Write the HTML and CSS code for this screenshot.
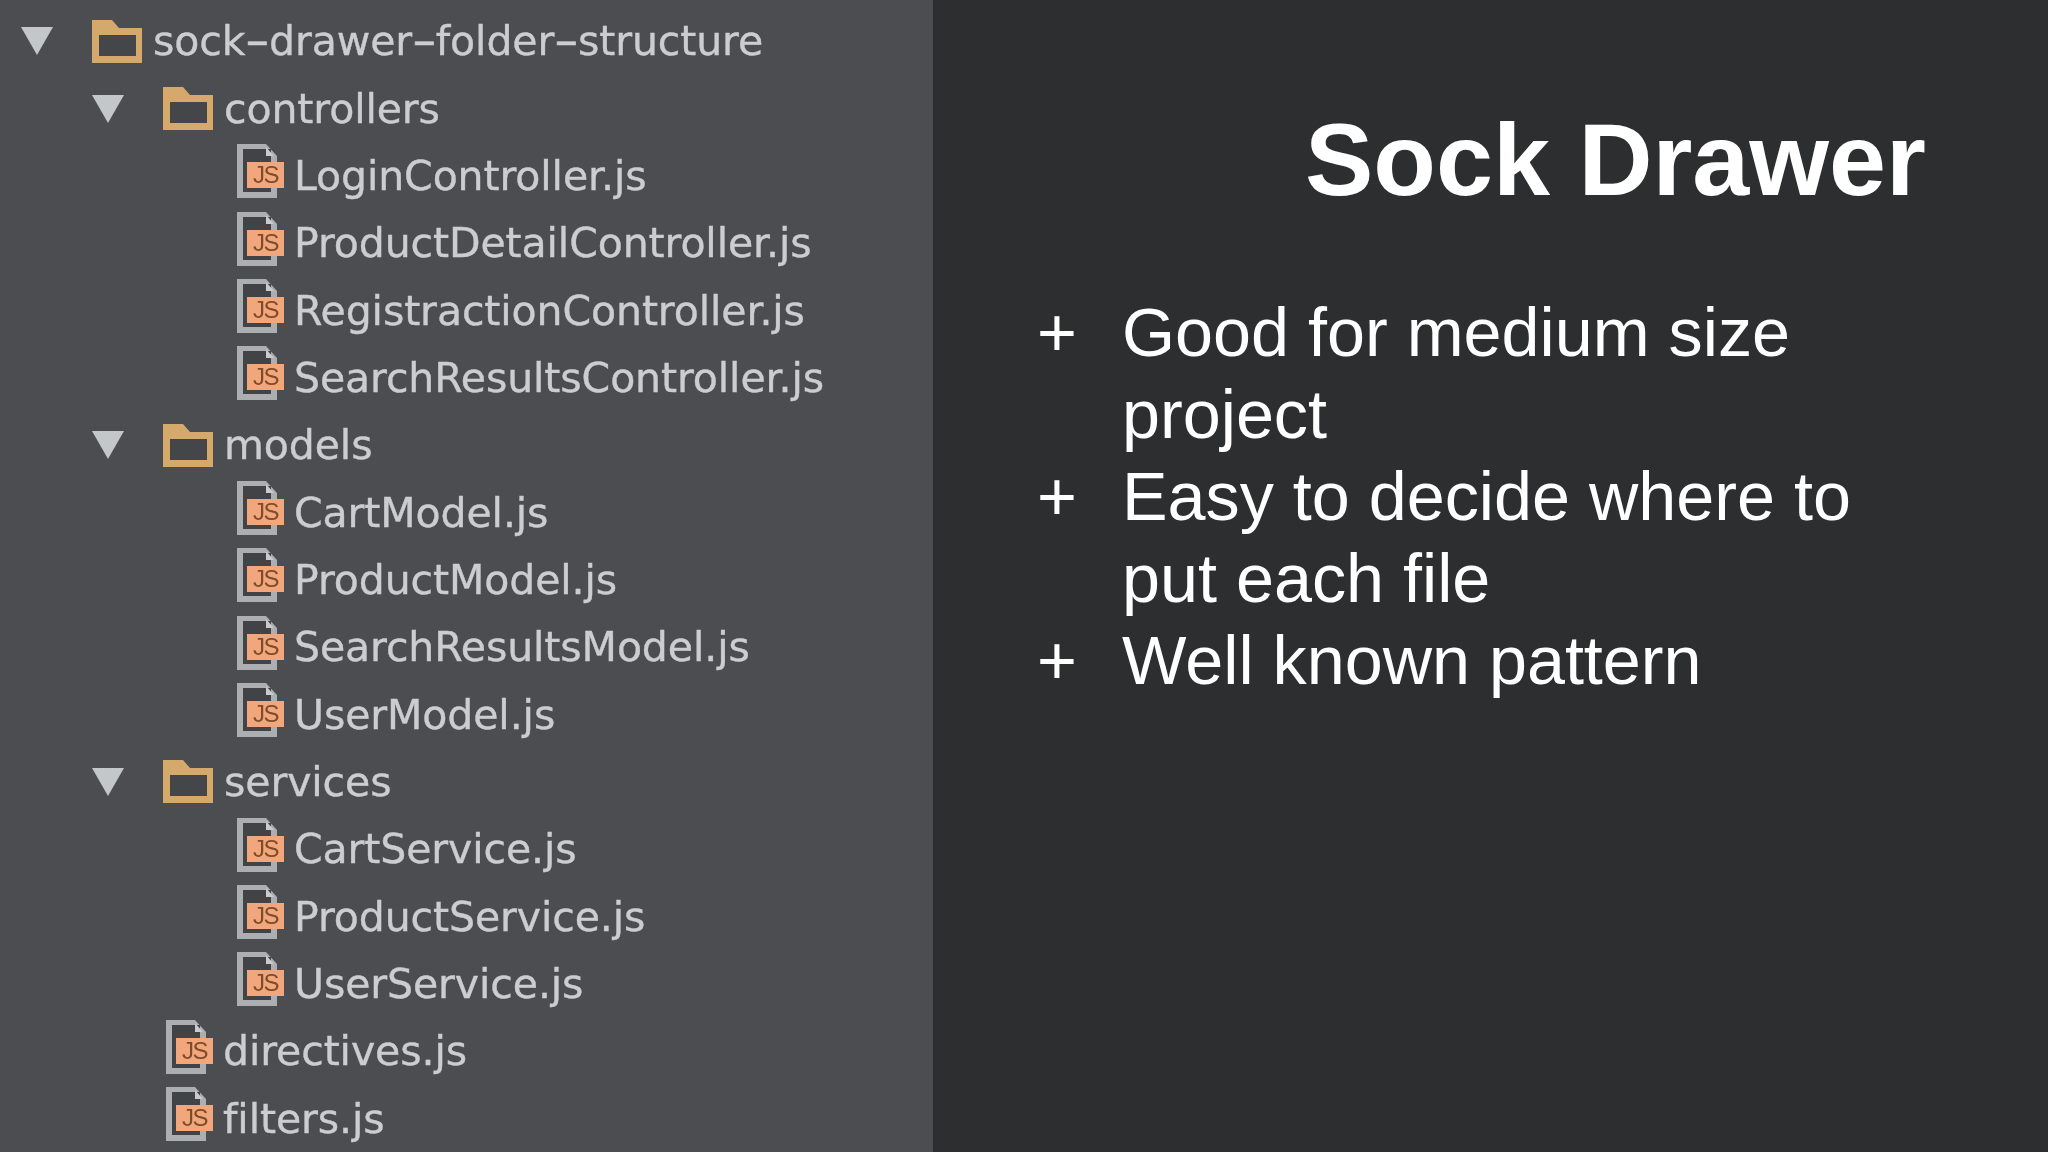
FILE: index.html
```html
<!DOCTYPE html>
<html lang="en">
<head>
<meta charset="utf-8">
<title>Sock Drawer</title>
<link rel="stylesheet" href="styles.css">
</head>
<body>
<svg class="defs" width="0" height="0" aria-hidden="true">
  <symbol id="tri" viewBox="0 0 32 28"><path d="M0 0H32L16 28Z" fill="#c3c7c9"/></symbol>
  <symbol id="folder" viewBox="0 0 50 43"><path fill-rule="evenodd" d="M0 0H20L27 8H50V43H0ZM7 15V36H44V15Z" fill="#d5a96b"/><rect x="7" y="15" width="37" height="21" fill="#45464a"/></symbol>
  <symbol id="file" viewBox="0 0 40 54">
    <path fill-rule="evenodd" d="M0 0H29L40 12V54H0ZM6 5V48H34V14H27V5Z" fill="#abafb2"/>
    <rect x="6" y="5" width="28" height="43" fill="#424346"/>
    <path d="M29 3L37 12H29Z" fill="#c9cccd"/>
  </symbol>
</svg>
<main class="slide">
  <section class="tree">
    <div class="row lvl0"><svg class="tri"><use href="#tri"/></svg><svg class="folder"><use href="#folder"/></svg><span class="name">sock<span class="hy">-</span>drawer<span class="hy">-</span>folder<span class="hy">-</span>structure</span></div>
    <div class="row lvl1"><svg class="tri"><use href="#tri"/></svg><svg class="folder"><use href="#folder"/></svg><span class="name">controllers</span></div>
    <div class="row lvl2"><div class="file"><svg class="page"><use href="#file"/></svg><b class="badge">JS</b></div><span class="name">LoginController.js</span></div>
    <div class="row lvl2"><div class="file"><svg class="page"><use href="#file"/></svg><b class="badge">JS</b></div><span class="name">ProductDetailController.js</span></div>
    <div class="row lvl2"><div class="file"><svg class="page"><use href="#file"/></svg><b class="badge">JS</b></div><span class="name">RegistractionController.js</span></div>
    <div class="row lvl2"><div class="file"><svg class="page"><use href="#file"/></svg><b class="badge">JS</b></div><span class="name">SearchResultsController.js</span></div>
    <div class="row lvl1"><svg class="tri"><use href="#tri"/></svg><svg class="folder"><use href="#folder"/></svg><span class="name">models</span></div>
    <div class="row lvl2"><div class="file"><svg class="page"><use href="#file"/></svg><b class="badge">JS</b></div><span class="name">CartModel.js</span></div>
    <div class="row lvl2"><div class="file"><svg class="page"><use href="#file"/></svg><b class="badge">JS</b></div><span class="name">ProductModel.js</span></div>
    <div class="row lvl2"><div class="file"><svg class="page"><use href="#file"/></svg><b class="badge">JS</b></div><span class="name">SearchResultsModel.js</span></div>
    <div class="row lvl2"><div class="file"><svg class="page"><use href="#file"/></svg><b class="badge">JS</b></div><span class="name">UserModel.js</span></div>
    <div class="row lvl1"><svg class="tri"><use href="#tri"/></svg><svg class="folder"><use href="#folder"/></svg><span class="name">services</span></div>
    <div class="row lvl2"><div class="file"><svg class="page"><use href="#file"/></svg><b class="badge">JS</b></div><span class="name">CartService.js</span></div>
    <div class="row lvl2"><div class="file"><svg class="page"><use href="#file"/></svg><b class="badge">JS</b></div><span class="name">ProductService.js</span></div>
    <div class="row lvl2"><div class="file"><svg class="page"><use href="#file"/></svg><b class="badge">JS</b></div><span class="name">UserService.js</span></div>
    <div class="row lvl1f"><div class="file"><svg class="page"><use href="#file"/></svg><b class="badge">JS</b></div><span class="name">directives.js</span></div>
    <div class="row lvl1f"><div class="file"><svg class="page"><use href="#file"/></svg><b class="badge">JS</b></div><span class="name">filters.js</span></div>
  </section>
  <section class="content">
    <h1 class="title">Sock Drawer</h1>
    <ul class="points">
      <li class="point"><span class="plus">+</span><span>Good for medium size project</span></li>
      <li class="point"><span class="plus">+</span><span>Easy to decide where to put each file</span></li>
      <li class="point"><span class="plus">+</span><span>Well known pattern</span></li>
    </ul>
  </section>
</main>
</body>
</html>
```
FILE: styles.css
```css
html, body { margin: 0; padding: 0; }
body { background: #2c2e2f; overflow: hidden; }
.defs { position: absolute; }
.slide { display: flex; width: 2048px; height: 1152px; overflow: hidden; }

.tree {
  flex: 0 0 933px;
  box-sizing: border-box;
  padding-top: 7.5px;
  background: #4b4d50;
  font-family: "DejaVu Sans", sans-serif;
  font-size: 41px;
  letter-spacing: -0.1px;
  color: #cbcdd1;
}
.row { display: flex; align-items: center; height: 67.35px; white-space: nowrap; }
.name { filter: blur(0.6px); -webkit-text-stroke: 0.4px #cbcdd1; }
.hy { display: inline-block; margin: 0 4.5px; transform: scaleX(1.7); }
.row svg { flex: none; filter: blur(0.5px); }
.lvl0 { padding-left: 21px; }
.lvl1 { padding-left: 92px; }
.lvl2 { padding-left: 237px; }
.lvl1f { padding-left: 166px; }
.tri { width: 32px; height: 28px; margin-right: 39px; }
.folder { width: 50px; height: 43px; margin-right: 11px; }
.file { position: relative; flex: none; width: 47px; height: 54px; margin: 0 10px 9px 0; }
.page { display: block; width: 40px; height: 54px; }
.badge {
  position: absolute;
  left: 10px;
  top: 18px;
  width: 37px;
  height: 26px;
  background: #f2a67b;
  color: #7d4c2a;
  font-family: "Liberation Sans", sans-serif;
  font-size: 24px;
  font-weight: 400;
  letter-spacing: -1.5px;
  line-height: 26px;
  text-align: center;
  filter: blur(0.5px);
}

.content {
  flex: 1;
  box-sizing: border-box;
  padding: 100px 0 0 104px;
  font-family: "Liberation Sans", Arial, sans-serif;
  color: #fff;
}
.title {
  margin: 0;
  padding-right: 122px;
  text-align: right;
  font-size: 102.5px;
  line-height: 120px;
  font-weight: 700;
}
.points { list-style: none; margin: 71px 0 0; padding: 0; font-size: 68.3px; line-height: 82px; }
.point { display: flex; width: 860px; }
.plus { flex: 0 0 85px; }
```
